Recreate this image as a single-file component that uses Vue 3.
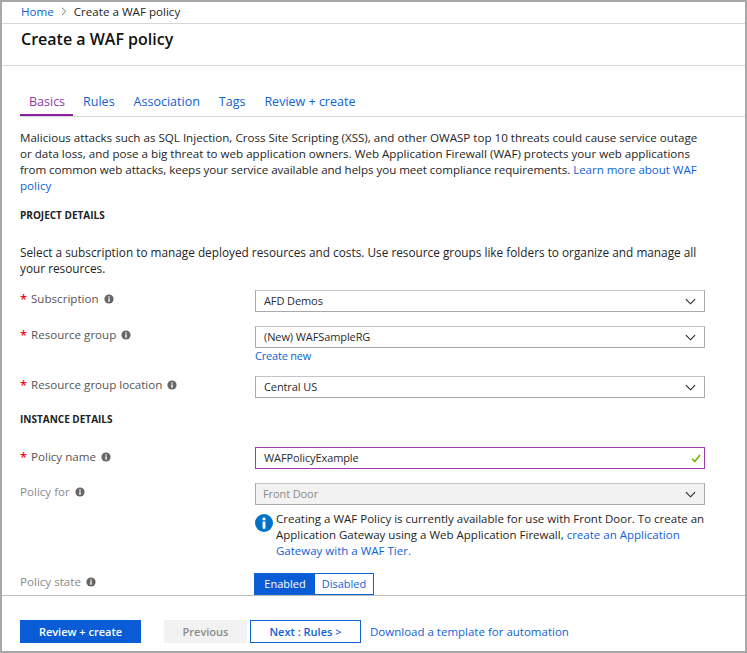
<template>
  <div class="frame">
    <div class="crumbs">
      <a class="link">Home</a>
      <svg width="6" height="9" viewBox="0 0 6 9"><path d="M1 .8 4.8 4.5 1 8.2" fill="none" stroke="#777" stroke-width="1" /></svg>
      <span>Create a WAF policy</span>
    </div>
    <div class="title-bar">
      <h1>Create a WAF policy</h1>
    </div>

    <div class="content">
      <div class="tabs">
        <a v-for="tab in tabs" :key="tab" class="tab" :class="{ active: tab === 'Basics' }">{{ tab }}</a>
      </div>

      <p class="intro">
        Malicious attacks such as SQL Injection, Cross Site Scripting (XSS), and other OWASP top 10 threats could cause service outage<br />
        or data loss, and pose a big threat to web application owners. Web Application Firewall (WAF) protects your web applications<br />
        <span class="tight">from common web attacks, keeps your service available and helps you meet compliance requirements.
        <a class="link">Learn more about WAF</a></span><br /><a class="link">policy</a>
      </p>

      <h2 class="section first">PROJECT DETAILS</h2>
      <p class="select-note">
        Select a subscription to manage deployed resources and costs. Use resource groups like folders to organize and manage all<br />
        your resources.
      </p>

      <div class="row row-sub">
        <div class="label"><span class="req">*</span>Subscription<svg class="tip" viewBox="0 0 10 10"><circle cx="5" cy="5" r="4.6" fill="#666" /><rect x="4.3" y="4.3" width="1.4" height="3.4" fill="#fff" /><rect x="4.3" y="2.3" width="1.4" height="1.3" fill="#fff" /></svg></div>
        <div class="field">
          <div class="control">AFD Demos<svg class="chev" viewBox="0 0 12 7"><path d="M1 1l5 5 5-5" fill="none" stroke="#222" stroke-width="1.2" /></svg></div>
        </div>
      </div>
      <div class="row row-group">
        <div class="label"><span class="req">*</span>Resource group<svg class="tip" viewBox="0 0 10 10"><circle cx="5" cy="5" r="4.6" fill="#666" /><rect x="4.3" y="4.3" width="1.4" height="3.4" fill="#fff" /><rect x="4.3" y="2.3" width="1.4" height="1.3" fill="#fff" /></svg></div>
        <div class="field">
          <div class="control">(New) WAFSampleRG<svg class="chev" viewBox="0 0 12 7"><path d="M1 1l5 5 5-5" fill="none" stroke="#222" stroke-width="1.2" /></svg></div>
          <a class="link create-new">Create new</a>
        </div>
      </div>
      <div class="row row-loc">
        <div class="label"><span class="req">*</span>Resource group location<svg class="tip" viewBox="0 0 10 10"><circle cx="5" cy="5" r="4.6" fill="#666" /><rect x="4.3" y="4.3" width="1.4" height="3.4" fill="#fff" /><rect x="4.3" y="2.3" width="1.4" height="1.3" fill="#fff" /></svg></div>
        <div class="field">
          <div class="control">Central US<svg class="chev" viewBox="0 0 12 7"><path d="M1 1l5 5 5-5" fill="none" stroke="#222" stroke-width="1.2" /></svg></div>
        </div>
      </div>

      <h2 class="section second">INSTANCE DETAILS</h2>

      <div class="row row-name">
        <div class="label label-name"><span class="req">*</span>Policy name<svg class="tip" viewBox="0 0 10 10"><circle cx="5" cy="5" r="4.6" fill="#666" /><rect x="4.3" y="4.3" width="1.4" height="3.4" fill="#fff" /><rect x="4.3" y="2.3" width="1.4" height="1.3" fill="#fff" /></svg></div>
        <div class="field">
          <div class="control valid">WAFPolicyExample<svg class="check" viewBox="0 0 10 9"><path d="M1 4.8 3.7 7.5 9 1" fill="none" stroke="#6bb700" stroke-width="1.6" /></svg></div>
        </div>
      </div>
      <div class="row row-for">
        <div class="label muted">Policy for<svg class="tip" viewBox="0 0 10 10"><circle cx="5" cy="5" r="4.6" fill="#666" /><rect x="4.3" y="4.3" width="1.4" height="3.4" fill="#fff" /><rect x="4.3" y="2.3" width="1.4" height="1.3" fill="#fff" /></svg></div>
        <div class="field">
          <div class="control disabled">Front Door<svg class="chev" viewBox="0 0 12 7"><path d="M1 1l5 5 5-5" fill="none" stroke="#222" stroke-width="1.2" /></svg></div>
          <div class="info">
            <svg class="info-icon" viewBox="0 0 19 19"><circle cx="9.5" cy="9.5" r="9.5" fill="#0072c6" /><rect x="8" y="8" width="3" height="7.5" fill="#fff" /><rect x="8" y="3.8" width="3" height="2.8" fill="#fff" /></svg>
            <p>
              Creating a WAF Policy is currently available for use with Front Door. To create an<br />
              Application Gateway using a Web Application Firewall, <a class="link">create an Application<br />Gateway with a WAF Tier.</a>
            </p>
          </div>
        </div>
      </div>
      <div class="row row-state">
        <div class="label muted">Policy state<svg class="tip" viewBox="0 0 10 10"><circle cx="5" cy="5" r="4.6" fill="#666" /><rect x="4.3" y="4.3" width="1.4" height="3.4" fill="#fff" /><rect x="4.3" y="2.3" width="1.4" height="1.3" fill="#fff" /></svg></div>
        <div class="toggle">
          <span class="on">Enabled</span><span class="off">Disabled</span>
        </div>
      </div>
    </div>

    <div class="footer">
      <button class="btn primary">Review + create</button>
      <button class="btn prev">Previous</button>
      <button class="btn next">Next : Rules &gt;</button>
      <a class="link download">Download a template for automation</a>
    </div>
  </div>
</template>

<script setup>
const tabs = ['Basics', 'Rules', 'Association', 'Tags', 'Review + create'];
</script>

<style>
html, body { margin: 0; background: #fff; }
</style>

<style scoped>
.frame {
  box-sizing: border-box;
  width: 747px;
  height: 653px;
  border: 2px solid #a8a8a8;
  font-family: "Open Sans", "Liberation Sans", sans-serif;
  font-size: 11.6px;
  color: #252525;
  display: flex;
  flex-direction: column;
  overflow: hidden;
}
.link { color: #0f62d6; }
.crumbs {
  box-sizing: border-box;
  height: 22px;
  padding: 0 0 2px 19px;
  border-bottom: 1px solid #d6d6d6;
  display: flex;
  align-items: center;
  gap: 7px;
  line-height: 18px;
}
.title-bar {
  height: 41px;
  padding-left: 19px;
  border-bottom: 1px solid #d6d6d6;
}
h1 {
  margin: 0;
  font-size: 16px;
  font-weight: 600;
  line-height: 30px;
  color: #111;
}
.content {
  height: 529px;
  padding: 0 18px;
  border-bottom: 1px solid #bbb;
  overflow: hidden;
}
.tabs {
  margin: 24px -18px 0 0;
  height: 26px;
  display: flex;
  gap: 19px;
  border-bottom: 1px solid #d6d6d6;
}
.tab {
  color: #0f62d6;
  font-size: 12.5px;
  line-height: 24px;
  height: 24px;
}
.tab.active {
  color: #8e3aa8;
  padding: 0 8px 0 9px;
  border-bottom: 2px solid #8a1fa0;
  margin-right: -9px;
}
p { margin: 0; }
.intro {
  margin-top: 13px;
  line-height: 16px;
}
.tight { letter-spacing: -0.05px; }
h2.section {
  margin: 0;
  font-size: 10px;
  font-weight: 700;
  color: #222;
  line-height: 14px;
}
.section.first { margin-top: 14px; }
.section.second { margin-top: 14px; }
.select-note {
  margin-top: 22px;
  line-height: 16px;
  font-size: 11.8px;
}
.row {
  display: flex;
  align-items: flex-start;
}
.label {
  width: 235px;
  display: flex;
  align-items: center;
  color: #555;
  line-height: 18px;
  flex: none;
}
.label-name { margin-top: 1px; }
.label.muted { color: #8a8a8a; }
.req {
  color: #e81123;
  width: 11px;
  font-size: 13px;
  font-weight: 600;
}
.tip {
  width: 10px;
  height: 10px;
  margin-left: 5px;
}
.field { width: 450px; }
.control {
  box-sizing: border-box;
  height: 22px;
  border: 1px solid #a9a9a9;
  border-top-color: #c4c4c4;
  padding-left: 8px;
  font-size: 11px;
  letter-spacing: -0.1px;
  line-height: 20px;
  display: flex;
  justify-content: space-between;
  align-items: center;
  color: #2b2b2b;
}
.chev {
  width: 11px;
  height: 7px;
  margin-right: 8px;
}
.check {
  width: 10px;
  height: 9px;
  margin-right: 3px;
}
.control.valid { border: 1px solid #9c3cb2; }
.control.disabled {
  background: #f2f2f2;
  color: #8a8a8a;
  padding-left: 7px;
}
.create-new {
  display: block;
  font-size: 11px;
  letter-spacing: -0.2px;
  line-height: 15px;
}
.row-sub { margin-top: 14px; }
.row-group { margin-top: 14px; }
.row-loc { margin-top: 13px; }
.row-name { margin-top: 21px; }
.row-for { margin-top: 14px; }
.row-state { margin-top: 14px; }
.info {
  display: flex;
  gap: 3px;
  margin-top: 6px;
}
.info-icon {
  width: 18px;
  height: 18px;
  flex: none;
  margin-top: 3px;
}
.info p {
  line-height: 16px;
  font-size: 11.5px;
}
.toggle {
  display: flex;
  height: 22px;
  box-sizing: border-box;
  border: 1px solid #0f62d6;
  margin-left: -1px;
  font-size: 11px;
}
.toggle span {
  line-height: 20px;
  text-align: center;
}
.toggle .on {
  width: 60px;
  background: #0a5cd6;
  color: #fff;
}
.toggle .off {
  width: 58px;
  color: #0f62d6;
}
.footer {
  flex: 1;
  display: flex;
  align-items: flex-start;
  padding: 24px 0 0 18px;
}
.btn {
  box-sizing: border-box;
  height: 23px;
  border: none;
  font-family: inherit;
  font-size: 11px;
  font-weight: 600;
  padding: 0;
}
.primary {
  width: 121px;
  background: #0a5cd6;
  color: #fff;
}
.prev {
  width: 83px;
  margin-left: 23px;
  background: #f2f2f2;
  color: #8a8a8a;
}
.next {
  width: 111px;
  margin-left: 3px;
  background: #fff;
  border: 1px solid #0f62d6;
  color: #0f62d6;
}
.download {
  margin-left: 9px;
  font-size: 11.5px;
  line-height: 23px;
}
</style>
